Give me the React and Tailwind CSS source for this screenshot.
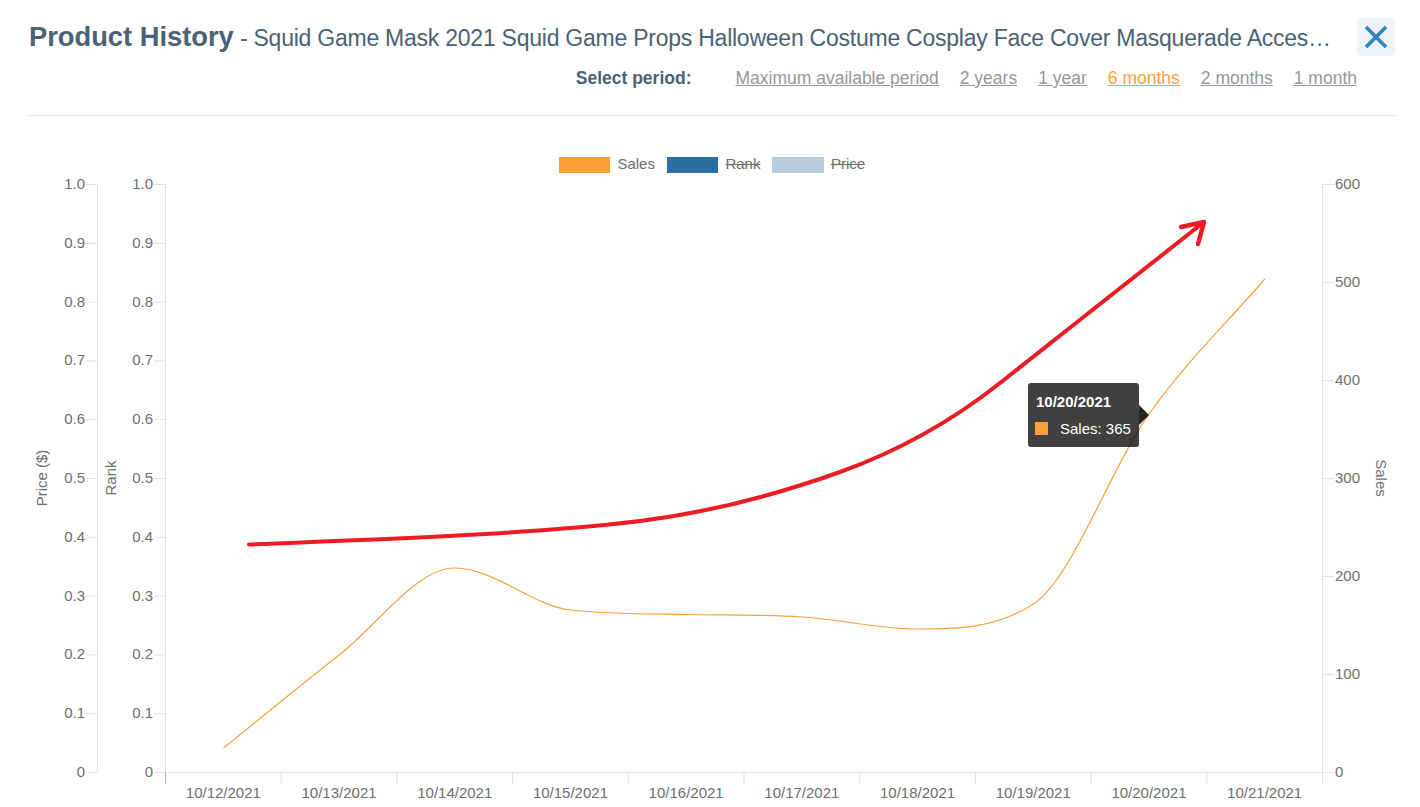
import React from 'react';

const font = { fontFamily: '"Liberation Sans", Arial, sans-serif' };

const periods = ['Maximum available period', '2 years', '1 year', '6 months', '2 months', '1 month'];
const leftTicks = ['1.0', '0.9', '0.8', '0.7', '0.6', '0.5', '0.4', '0.3', '0.2', '0.1', '0'];
const rightTicks = ['600', '500', '400', '300', '200', '100', '0'];
const dates = ['10/12/2021', '10/13/2021', '10/14/2021', '10/15/2021', '10/16/2021', '10/17/2021', '10/18/2021', '10/19/2021', '10/20/2021', '10/21/2021'];

const top = 184;
const bottom = 772;
const plotLeft = 165.5;
const plotRight = 1322.5;
const stepX = (plotRight - plotLeft) / 10;

const salesPoints = [
  [223.5, 748], [339.2, 655], [454.9, 568], [570.6, 610], [686.3, 614.5],
  [802, 617], [917.7, 629], [1033.4, 604], [1149.1, 414], [1264.8, 279],
];

// monotone cubic, like chart.js cubicInterpolationMode: 'monotone'
function monotonePath(pts) {
  const n = pts.length;
  const delta = [];
  for (let i = 0; i < n - 1; i++) {
    delta.push((pts[i + 1][1] - pts[i][1]) / (pts[i + 1][0] - pts[i][0]));
  }
  const m = pts.map((_, i) => {
    if (i === 0) return delta[0];
    if (i === n - 1) return delta[n - 2];
    return delta[i - 1] * delta[i] <= 0 ? 0 : (delta[i - 1] + delta[i]) / 2;
  });
  for (let i = 0; i < n - 1; i++) {
    if (delta[i] === 0) continue;
    const a = m[i] / delta[i];
    const b = m[i + 1] / delta[i];
    const s = a * a + b * b;
    if (s > 9) {
      const t = 3 / Math.sqrt(s);
      m[i] = a * t * delta[i];
      m[i + 1] = b * t * delta[i];
    }
  }
  let d = `M${pts[0][0]} ${pts[0][1]}`;
  for (let i = 1; i < n; i++) {
    const h = (pts[i][0] - pts[i - 1][0]) / 3;
    d += ` C${pts[i - 1][0] + h} ${pts[i - 1][1] + m[i - 1] * h} ${pts[i][0] - h} ${pts[i][1] - m[i] * h} ${pts[i][0]} ${pts[i][1]}`;
  }
  return d;
}

const Chart = () => (
  <svg width="1420" height="633" viewBox="0 174 1420 633" className="block" fontSize="15" fill="#6e6e6e" style={font}>
    {/* axes */}
    <g stroke="#e1e1e1" strokeWidth="1" fill="none">
      <path d={`M97.5 ${top} V${bottom}`} />
      <path d={`M${plotLeft} ${top} V${bottom}`} />
      <path d={`M${plotLeft} ${bottom} V784`} stroke="#b4b4b4" />
      <path d={`M${plotRight} ${top} V784`} />
      <path d={`M${plotLeft} ${bottom + 0.5} H${plotRight}`} />
      {leftTicks.map((_, i) => {
        const y = top + (i * (bottom - top)) / 10 + 0.5;
        return (
          <g key={i}>
            <path d={`M86 ${y} H97.5`} />
            <path d={`M154 ${y} H${plotLeft}`} />
          </g>
        );
      })}
      {rightTicks.map((_, i) => {
        const y = top + i * 98 + 0.5;
        return <path key={i} d={`M${plotRight} ${y} H1334`} />;
      })}
      {dates.slice(1).map((_, i) => {
        const x = plotLeft + stepX * (i + 1);
        return <path key={i} d={`M${x} ${bottom} V784`} />;
      })}
    </g>

    {/* tick labels */}
    {leftTicks.map((label, i) => {
      const y = top + (i * (bottom - top)) / 10 + 5;
      return (
        <g key={i}>
          <text x="85" y={y} textAnchor="end">{label}</text>
          <text x="153" y={y} textAnchor="end">{label}</text>
        </g>
      );
    })}
    {rightTicks.map((label, i) => (
      <text key={i} x="1335" y={top + i * 98 + 5}>{label}</text>
    ))}
    {dates.map((label, i) => (
      <text key={i} x={plotLeft + stepX * (i + 0.5)} y="797.5" textAnchor="middle">{label}</text>
    ))}

    {/* axis titles */}
    <text transform="translate(47 478) rotate(-90)" textAnchor="middle">Price ($)</text>
    <text transform="translate(116 478) rotate(-90)" textAnchor="middle">Rank</text>
    <text transform="translate(1376 478) rotate(90)" textAnchor="middle">Sales</text>

    {/* sales line */}
    <path d={monotonePath(salesPoints)} fill="none" stroke="#ff9f3b" strokeWidth="1.2" />

    {/* hand drawn red arrow */}
    <g fill="none" stroke="#ed1c24" strokeLinecap="round" strokeLinejoin="round">
      <path
        d="M249 544.5 C380 539 530 534.5 640 521 C707 512.6 773 496 840 472 C893 453 947 425 1000 383 C1068 329.5 1136 275 1204 222"
        strokeWidth="4"
      />
      <path d="M1181 227 L1204 222 L1198 244" strokeWidth="4.5" />
    </g>

    {/* tooltip caret */}
    <path d="M1139 405 L1149 415 L1139 425 Z" fill="#000000" fillOpacity="0.85" />
  </svg>
);

const LegendItem = ({ color, label, off }) => (
  <div className="flex items-center gap-[7px]">
    <span className="block w-[51.5px] h-[16px]" style={{ backgroundColor: color }} />
    <span className={`pb-[2px] text-[15px] leading-[16px] text-[#6e6e6e] ${off ? 'line-through' : ''}`}>{label}</span>
  </div>
);

export default function App() {
  return (
    <div className="relative w-[1420px] h-[807px] overflow-hidden bg-white" style={font}>
      <div className="pl-[29px] pr-[25px] pt-[18px]">
        {/* Title */}
        <div className="flex items-center justify-between h-[38px]">
          <h1 className="w-[1306px] truncate text-[#4a6274] text-[23px] tracking-[-0.24px]">
            <span className="font-bold text-[27.3px] tracking-normal">Product History</span>
            {' - Squid Game Mask 2021 Squid Game Props Halloween Costume Cosplay Face Cover Masquerade Accessories for Party'}
          </h1>
          <button className="w-[38px] h-[38px] rounded-[5px] bg-[#eff3f6] flex items-center justify-center">
            <svg width="24" height="22" viewBox="0 0 24 22" fill="none" stroke="#2e86c1" strokeWidth="3.6">
              <path d="M2 1 L22 21 M22 1 L2 21" />
            </svg>
          </button>
        </div>

        {/* Period selector */}
        <div className="flex items-center justify-end h-[24px] mt-[10px] pr-[38px] text-[17.5px]">
          <span className="font-bold text-[#4a6274] mr-[44px]">Select period:</span>
          <div className="flex gap-[21px]">
            {periods.map((p) => (
              <a key={p} className={`underline ${p === '6 months' ? 'text-[#ff9f3b]' : 'text-[#979797]'}`}>{p}</a>
            ))}
          </div>
        </div>

        <div className="mt-[25px] border-t border-[#dce3e8]" />

        {/* Legend */}
        <div className="flex justify-center gap-[12px] mt-[40px] h-[18px]">
          <LegendItem color="#ff9f3b" label="Sales" />
          <LegendItem color="#2a6fa3" label="Rank" off />
          <LegendItem color="#b9ccdc" label="Price" off />
        </div>
      </div>

      <Chart />

      {/* Tooltip */}
      <div className="absolute left-[1028px] top-[383px] w-[111px] h-[64px] rounded-[3px] bg-black/75 text-white text-[15px] pl-[8px] pt-[10px]">
        <div className="font-bold leading-[17px]">10/20/2021</div>
        <div className="flex items-center mt-[10px] leading-[17px]">
          <span className="w-[13px] h-[13px] bg-[#ff9f3b] mr-[12px] -ml-[1px]" />
          <span>Sales: 365</span>
        </div>
      </div>
    </div>
  );
}
